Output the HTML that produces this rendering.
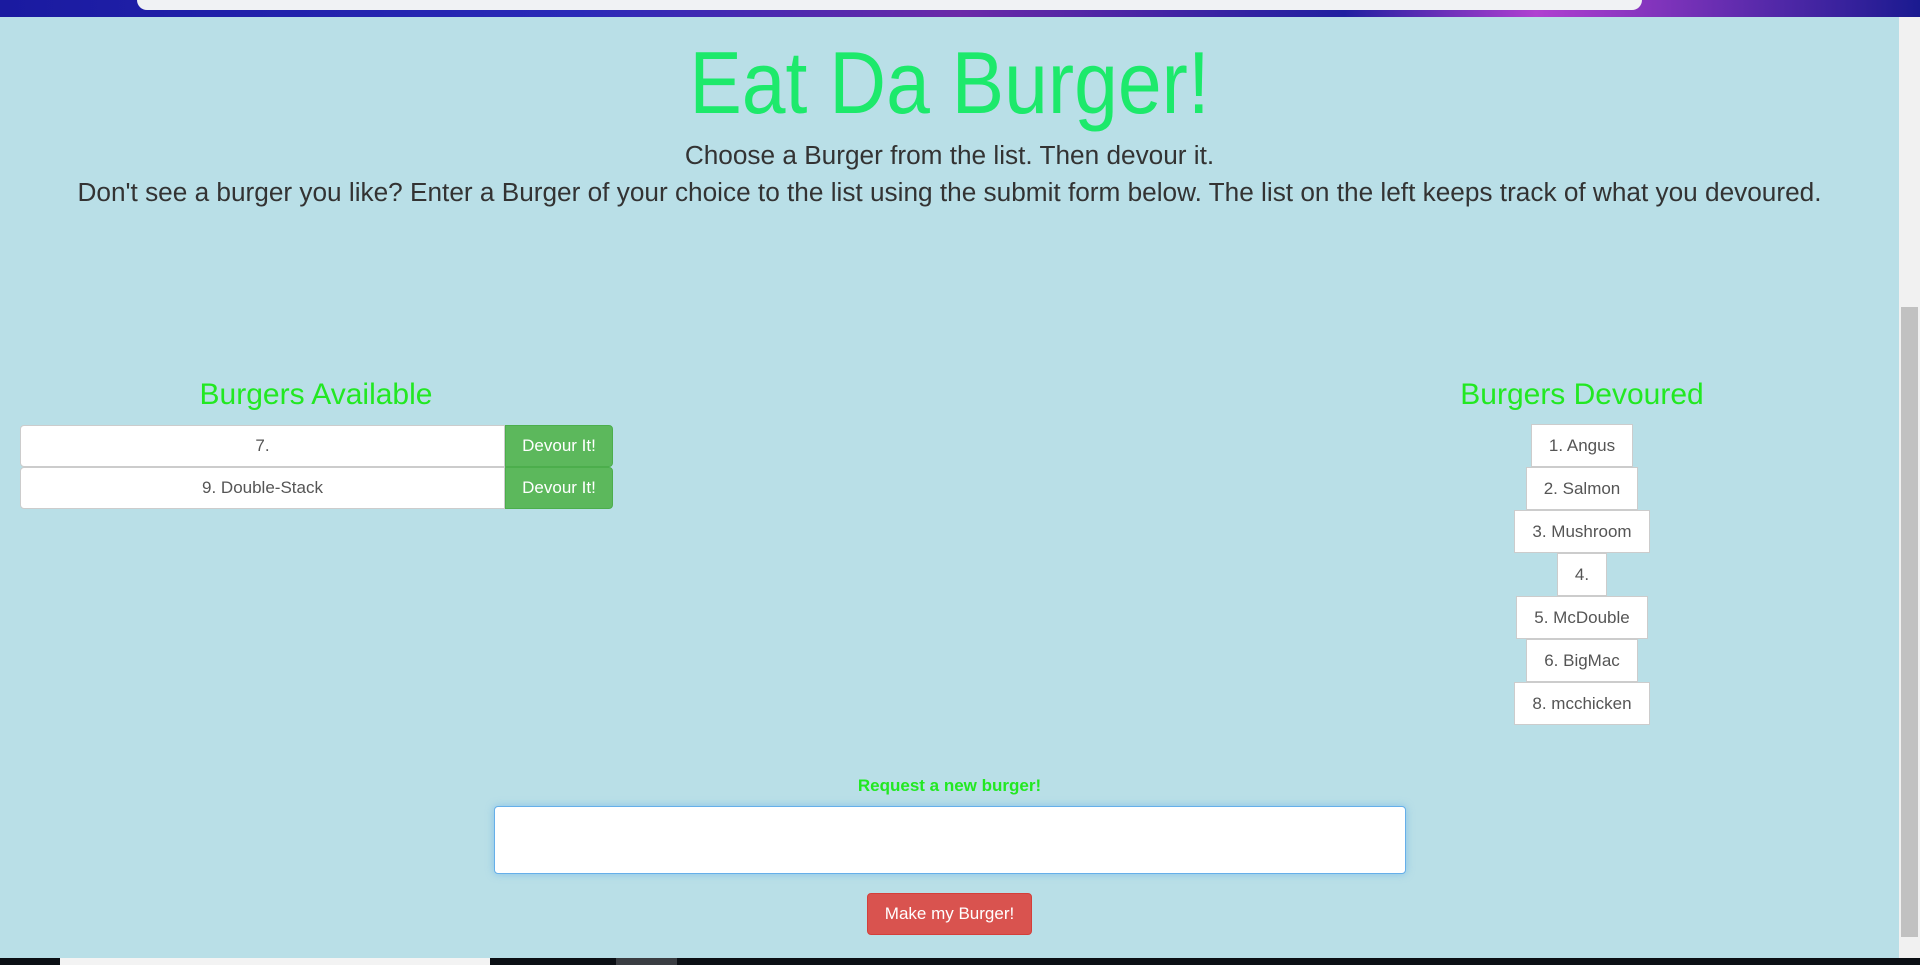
<!DOCTYPE html>
<html><head><meta charset="utf-8"><style>
*{box-sizing:border-box;margin:0;padding:0}
html,body{width:1920px;height:965px;overflow:hidden;background:#b9dfe7;font-family:"Liberation Sans",Arial,sans-serif;color:#333}
.topbar{position:absolute;left:0;top:0;width:1920px;height:17px;background:linear-gradient(90deg,#1a1aa0,#2a2ab8 30%,#6b2aa8 50%,#2020a0 70%,#b040d0 80%,#1a1a90)}
.topbar .url{position:absolute;left:137px;top:0;width:1505px;height:10px;background:#f0f2f4;border-radius:0 0 10px 10px}
.scroll{position:absolute;left:1899px;top:17px;width:21px;height:941px;background:#f1f1f1}
.thumb{position:absolute;left:1901px;top:307px;width:17px;height:630px;background:#c1c1c1}
.task{position:absolute;left:0;top:958px;width:1920px;height:7px;background:#0b0f14}
.task .a{position:absolute;left:60px;top:0;width:430px;height:7px;background:#f3f3f3}
.task .b{position:absolute;left:616px;top:0;width:61px;height:7px;background:#3a3d42}
h1{position:absolute;left:0;width:1899px;top:33px;text-align:center;font-weight:normal;font-size:88px;color:#1de96b;line-height:100px;transform:scaleX(0.894)}
.p{position:absolute;left:0;width:1899px;text-align:center;font-size:26.2px;line-height:30px}
h3{position:absolute;font-weight:normal;font-size:30px;color:#22e822;text-align:center;line-height:34px}
.row{position:absolute;left:20px;width:593px;height:42px;display:flex}
.row .t{flex:0 0 485px;background:#fff;border:1px solid #ccc;border-radius:4px 0 0 4px;text-align:center;font-size:17px;line-height:40px;color:#555}
.row .b{flex:1;background:#5cb85c;border:1px solid #4cae4c;border-radius:0 4px 4px 0;color:#fff;font-size:17px;text-align:center;line-height:40px}
.dv{position:absolute;left:1432px;width:300px;top:424px;text-align:center}
.dv div{display:inline-block;background:#fff;border:1px solid #ccc;height:43px;line-height:41px;font-size:17px;color:#555;padding:0 17px;margin-bottom:0}
.req{position:absolute;left:0;width:1899px;top:776px;text-align:center;color:#22e822;font-weight:bold;font-size:17px}
.ta{position:absolute;left:494px;top:806px;width:912px;height:68px;background:#fff;border:1px solid #66afe9;border-radius:4px;box-shadow:0 0 8px rgba(102,175,233,.6)}
.btn{position:absolute;left:867px;top:893px;width:165px;height:42px;background:#d9534f;border:1px solid #d43f3a;border-radius:4px;color:#fff;font-size:17px;text-align:center;line-height:40px}
</style></head><body>
<div class="topbar"><div class="url"></div></div>
<h1>Eat Da Burger!</h1>
<div class="p" style="top:140px">Choose a Burger from the list. Then devour it.</div>
<div class="p" style="top:177px">Don't see a burger you like? Enter a Burger of your choice to the list using the submit form below. The list on the left keeps track of what you devoured.</div>
<h3 style="left:116px;width:400px;top:378px">Burgers Available</h3>
<h3 style="left:1382px;width:400px;top:378px">Burgers Devoured</h3>
<div class="row" style="top:425px"><div class="t">7.</div><div class="b">Devour It!</div></div>
<div class="row" style="top:467px"><div class="t">9. Double-Stack</div><div class="b">Devour It!</div></div>
<div class="dv">
<div>1. Angus</div><br><div>2. Salmon</div><br><div>3. Mushroom</div><br><div>4.</div><br><div>5. McDouble</div><br><div>6. BigMac</div><br><div>8. mcchicken</div>
</div>
<div class="req">Request a new burger!</div>
<div class="ta"></div>
<div class="btn">Make my Burger!</div>
<div class="scroll"></div><div class="thumb"></div>
<div class="task"><div class="a"></div><div class="b"></div></div>
</body></html>
